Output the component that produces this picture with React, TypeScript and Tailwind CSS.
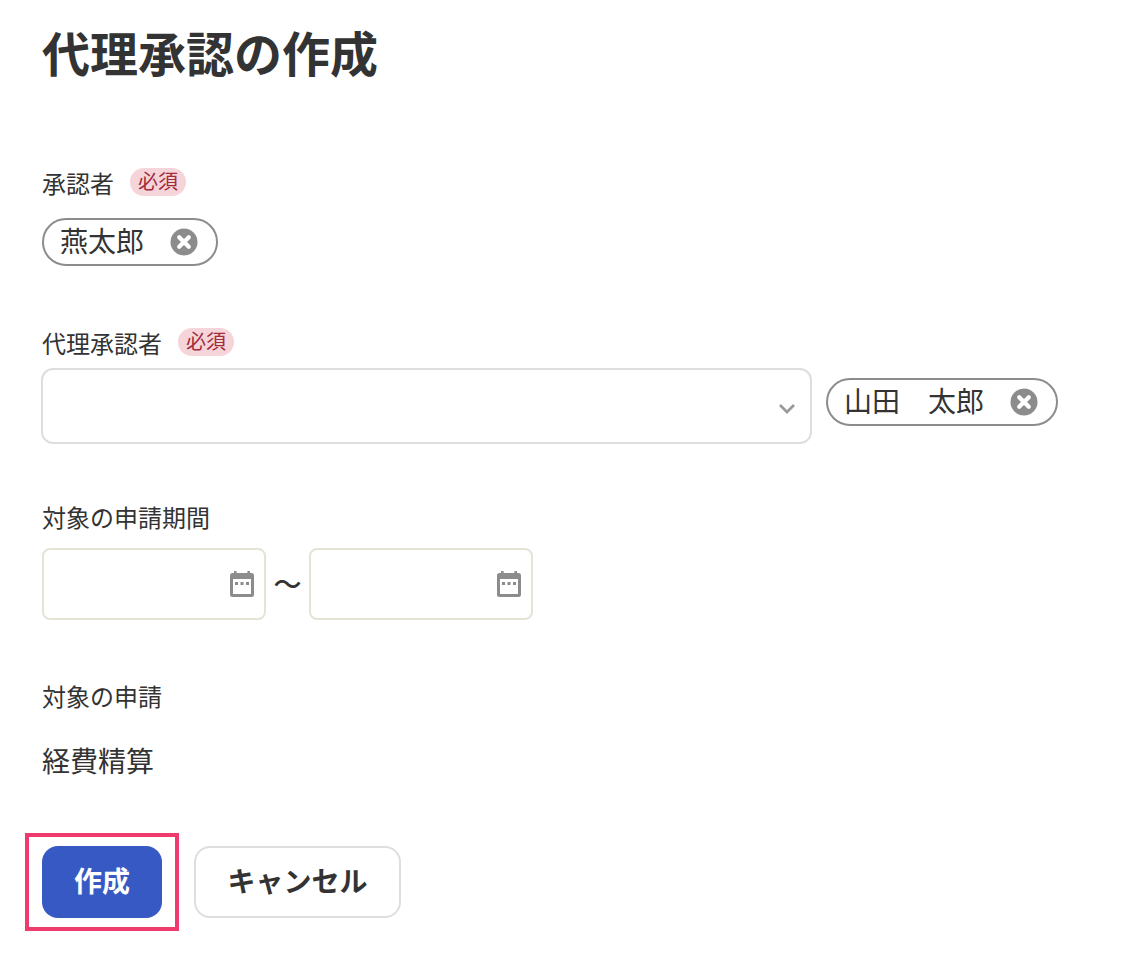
const font = { fontFamily: '"Noto Sans CJK JP", "Noto Sans", sans-serif' };

function ClearIcon() {
  return (
    <svg width="28" height="28" viewBox="0 0 28 28" className="shrink-0">
      <circle cx="14" cy="14" r="13.5" fill="#8c8c8c" />
      <path d="M9.200 9.200L18.800 18.800M18.800 9.200L9.200 18.800" stroke="#fff" strokeWidth="4.200" strokeLinecap="round" />
    </svg>
  );
}

function Chip({ name, width }: { name: string; width: string }) {
  return (
    <div className={`flex h-12 items-center justify-between rounded-full border-2 border-[#8c8c8c] pl-[16px] pr-[18px] ${width}`}>
      <span className="mb-[4px] whitespace-pre text-[28px] leading-none text-[#333]">{name}</span>
      <ClearIcon />
    </div>
  );
}

function Required() {
  return (
    <span className="flex h-7 w-14 items-center justify-center rounded-full bg-[#f5d5d9] pb-[2px] text-[20px] leading-none text-[#a52a3a]">
      必須
    </span>
  );
}

function CalendarIcon() {
  return (
    <svg width="24" height="26" viewBox="0 0 24 26" className="shrink-0">
      <path d="M4 0h2.600v2h10.800V0H20v2h1.500A2.500 2.500 0 0 1 24 4.500v19a2.500 2.500 0 0 1-2.500 2.500h-19A2.500 2.500 0 0 1 0 23.500v-19A2.500 2.500 0 0 1 2.500 2H4z" fill="#8c8c8c" />
      <rect x="3" y="8" width="18" height="15" fill="#fff" />
      <rect x="5" y="11" width="3" height="3" fill="#8c8c8c" />
      <rect x="10.500" y="11" width="3" height="3" fill="#8c8c8c" />
      <rect x="16" y="11" width="3" height="3" fill="#8c8c8c" />
    </svg>
  );
}

function DateInput() {
  return (
    <div className="flex h-[72px] w-56 items-center justify-end rounded-lg border-2 border-[#e6e2d8] pr-[10px]">
      <CalendarIcon />
    </div>
  );
}

export default function App() {
  return (
    <div style={font} className="h-[966px] w-[1124px] overflow-hidden bg-white pl-[42px] text-[#333]">
      <h1 className="pt-[15px] text-[48px] font-bold leading-[72px]">代理承認の作成</h1>

      <div className="mt-[81px] flex h-7 items-center gap-4">
        <span className="mt-[1px] text-[24px] leading-none">承認者</span>
        <Required />
      </div>
      <div className="mt-[22px]">
        <Chip name="燕太郎" width="w-[176px]" />
      </div>

      <div className="mt-[62px] flex h-7 items-center gap-4">
        <span className="mt-[1px] text-[24px] leading-none">代理承認者</span>
        <Required />
      </div>
      <div className="mt-3 flex items-start gap-[14px]">
        <div className="-ml-[1px] flex h-[76px] w-[771px] items-center justify-end rounded-xl border-2 border-[#dedede] pr-[14px]">
          <svg width="18" height="12" viewBox="0 0 18 12" className="mt-[3px]">
            <path d="M2 3l7 7 7-7" fill="none" stroke="#9a9a9a" strokeWidth="2.800" />
          </svg>
        </div>
        <div className="mt-[10px]">
          <Chip name="山田　太郎" width="w-[232px]" />
        </div>
      </div>

      <div className="mt-[59px] text-[24px] leading-[28px]">対象の申請期間</div>
      <div className="mt-[17px] flex items-center">
        <DateInput />
        <span className="mb-[3px] w-[43px] text-center text-[28px] font-medium leading-none">〜</span>
        <DateInput />
      </div>

      <div className="mt-[62px] text-[24px] leading-[28px]">対象の申請</div>
      <div className="mt-[30px] text-[28px] leading-[40px]">経費精算</div>

      <div className="mt-[66px] flex items-start gap-8">
        <div className="relative">
          <button className="flex h-[72px] w-[120px] items-center justify-center rounded-2xl bg-[#3659c4] pb-[4px] text-[28px] font-bold text-white">
            作成
          </button>
          <div className="absolute -bottom-[13px] -left-[17px] -right-[17px] -top-[13px] border-[4px] border-[#ee3a6c]" />
        </div>
        <button className="flex h-[72px] w-[207px] items-center justify-center rounded-2xl border-2 border-[#dedede] bg-white pb-[4px] text-[28px] font-bold text-[#333]">
          キャンセル
        </button>
      </div>
    </div>
  );
}
